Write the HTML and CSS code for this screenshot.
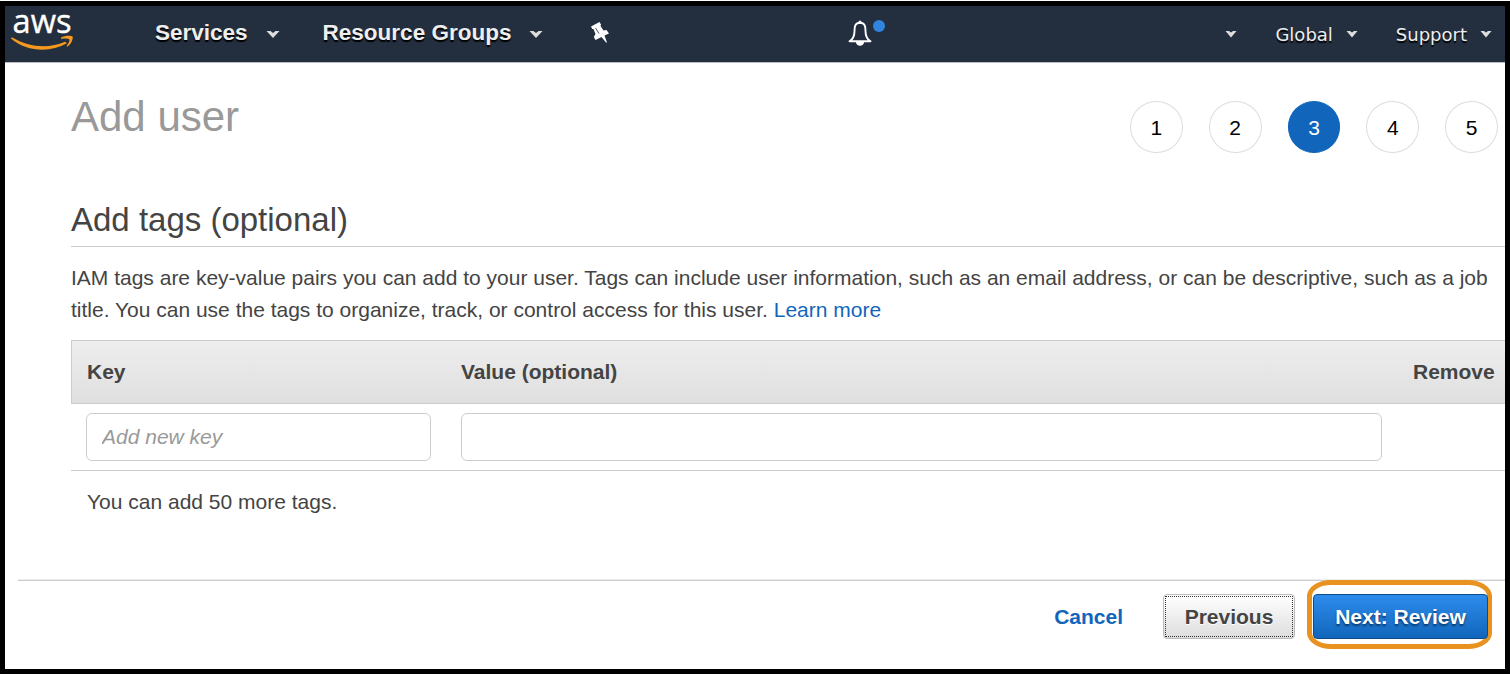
FILE: index.html
```html
<!DOCTYPE html>
<html lang="en">
<head>
<meta charset="utf-8">
<title>Add user</title>
<link rel="stylesheet" href="styles.css">
</head>
<body>
<div class="frame">
  <header class="nav">
    <svg class="logo" width="64" height="44" viewBox="0 0 64 44">
      <text class="logo-text" x="1.500" y="21.500" textLength="59" lengthAdjust="spacingAndGlyphs">aws</text>
      <path class="logo-smile" d="M.8 26.300C18 36.500 38 38 54 30.800L56 32.300C39 42 16 41 0 27.500Z"/>
      <path class="logo-smile" d="M50 26.500C54 24.500 60 24.500 61.600 25.500C62.400 28 60 33.500 56.300 35.800L55.500 35C57.500 32.500 59 29.500 58.300 28.200C56.500 27.300 54 27.500 50.300 28Z"/>
    </svg>
    <a class="menu services">Services<svg class="caret" width="14" height="9" viewBox="0 0 14 9"><path d="M.5 1H4.500L7 3L9.500 1H13.500L7 8Z"/></svg></a>
    <a class="menu groups">Resource Groups<svg class="caret" width="14" height="9" viewBox="0 0 14 9"><path d="M.5 1H4.500L7 3L9.500 1H13.500L7 8Z"/></svg></a>
    <svg class="pin" width="20" height="22" viewBox="0 0 20 22">
      <path d="M0 4.500L8.500 0L10 2.500L9.500 4L12.500 8.500L15.500 8L18 11.500L13.500 13.500L16 20.500L15 20.500L10.500 15L4.500 18L2.800 15L4.500 12L2.500 7L1.200 7Z" fill="#fff"/>
      <path d="M4.500 6L8 11.500" stroke="#232f3e" stroke-width=".8"/>
    </svg>
    <span class="bell">
      <svg width="24" height="26" viewBox="0 0 24 26">
        <path d="M12 2.800C7 3 6.500 6.500 6.500 11C6.500 16 4.500 19.500 1.500 21.300H22.500C19.500 19.500 17.500 16 17.500 11C17.500 6.500 17 3 12 2.800Z" fill="none" stroke="#fff" stroke-width="1.900" stroke-linejoin="round"/>
        <circle cx="12" cy="2" r="1.500" fill="#fff"/>
        <path d="M8 22H16C16 27 8 27 8 22Z" fill="#fff"/>
      </svg>
      <i class="dot"></i>
    </span>
    <div class="account">
      <svg class="caret" width="12" height="8" viewBox="0 0 12 8"><path d="M.5 1H4L6 2.500L8 1H11.500L6 7.500Z"/></svg>
      <a>Global<svg class="caret" width="12" height="8" viewBox="0 0 12 8"><path d="M.5 1H4L6 2.500L8 1H11.500L6 7.500Z"/></svg></a>
      <a>Support<svg class="caret" width="12" height="8" viewBox="0 0 12 8"><path d="M.5 1H4L6 2.500L8 1H11.500L6 7.500Z"/></svg></a>
    </div>
  </header>
  <main class="content">
    <div class="title-row">
      <h1>Add user</h1>
      <ol class="steps"><li>1</li><li>2</li><li class="current">3</li><li>4</li><li>5</li></ol>
    </div>
    <h2>Add tags (optional)</h2>
    <p class="intro">IAM tags are key-value pairs you can add to your user. Tags can include user information, such as an email address, or can be descriptive, such as a job<br>title. You can use the tags to organize, track, or control access for this user. <a class="link">Learn more</a></p>
    <div class="thead"><span>Key</span><span>Value (optional)</span><span>Remove</span></div>
    <div class="trow"><input class="key" type="text" placeholder="Add new key"><input class="value" type="text"></div>
    <p class="remaining">You can add 50 more tags.</p>
  </main>
  <footer class="actions">
    <a class="cancel">Cancel</a>
    <button class="btn previous"><span>Previous</span></button>
    <div class="highlight"><button class="btn next">Next: Review</button></div>
  </footer>
</div>
</body>
</html>
```
FILE: styles.css
```css
* { box-sizing: border-box; }
body {
  margin: 0;
  padding-top: 1px;
  background: #fff;
  color: #444;
  font: 21px/32px "Liberation Sans", Arial, sans-serif;
  overflow: hidden;
}
.frame {
  width: 1510px;
  height: 673px;
  border: 5px solid #000;
  display: flex;
  flex-direction: column;
}
.nav {
  height: 57px;
  flex: none;
  display: flex;
  align-items: flex-start;
  background: #232f3e;
  border-bottom: 1px solid #b9bcc3;
  color: #eee;
  text-shadow: 0 2px 1px #000;
}
.caret { fill: #ddd; flex: none; }
.logo { margin: 5px 0 0 6px; flex: none; overflow: visible; }
.logo-text { font: 500 33px "Open Sans", "Noto Sans", sans-serif; fill: #fff; stroke: #fff; stroke-width: .4px; text-shadow: none; }
.logo-smile { fill: #f7981f; }
.menu {
  display: flex;
  align-items: center;
  font-weight: bold;
  font-size: 22.5px;
  margin-top: 11px;
  white-space: nowrap;
}
.menu .caret { margin: 2px 0 0 18px; }
.services { margin-left: 80px; }
.groups { margin-left: 43px; }
.pin { margin: 16px 0 0 48px; }
.bell { display: flex; margin: 14px 0 0 237px; }
.dot { width: 12px; height: 12px; margin-left: 1px; border-radius: 50%; background: #3184dd; }
.account {
  display: flex;
  align-items: center;
  margin: 13px 13px 0 auto;
  font: 18px/32px "DejaVu Sans", Verdana, sans-serif;
}
.account .caret { margin-top: -2px; }
.account a { display: flex; align-items: center; margin-left: 38px; }
.account a .caret { margin-left: 13px; }
.content { padding-left: 66px; }
.title-row { display: flex; justify-content: space-between; padding: 30px 7px 0 0; }
h1 { margin: 0; color: #999; font-weight: normal; font-size: 42px; line-height: 48px; }
.steps { list-style: none; margin: 8px 0 0; padding: 0; display: flex; gap: 26px; color: #000; }
.steps li {
  width: 52.8px;
  height: 52px;
  border: 1px solid #ddd;
  border-radius: 50%;
  line-height: 52px;
  text-align: center;
}
.steps .current { background: #1166bb; border-color: #1166bb; color: #fff; }
h2 {
  margin: 46px 0 0;
  height: 48px;
  border-bottom: 1px solid #ccc;
  font-weight: normal;
  font-size: 33px;
  line-height: 42px;
}
.intro { margin: 15px 0 14px; white-space: nowrap; }
.link, .cancel { color: #1166bb; }
.thead {
  display: grid;
  grid-template-columns: 374px 952px 1fr;
  height: 64px;
  padding-left: 15px;
  border: 1px solid #ccc;
  border-right: 0;
  background: linear-gradient(#eee, #dfdfdf);
  font-weight: bold;
  line-height: 62px;
}
.trow { display: flex; gap: 30px; height: 67px; padding: 9px 0 0 15px; border-bottom: 1px solid #ccc; }
input {
  height: 48px;
  padding: 0 15px;
  border: 1px solid #ccc;
  border-radius: 6px;
  font: 21px "Liberation Sans", Arial, sans-serif;
}
input::placeholder { color: #999; font-style: italic; opacity: 1; }
.key { width: 345px; }
.value { width: 921px; }
.remaining { margin: 15px 0 0 16px; }
.actions {
  display: flex;
  margin: 61px 0 0 13px;
  padding: 2px 13px 0 0;
  justify-content: flex-end;
  align-items: flex-start;
  background: linear-gradient(#eee 1px, #ccc 1px, #ccc 2px, transparent 2px);
  font-weight: bold;
}
.cancel { margin: 20px 40px 0 0; }
.btn { font: bold 21px/32px "Liberation Sans", Arial, sans-serif; border-radius: 4px; padding: 0; }
.previous {
  width: 132px;
  height: 45px;
  margin: 13px 12px 0 0;
  padding: 1px;
  border: 1px solid #bbb;
  background: linear-gradient(#fff, #ddd);
  color: #444;
  text-shadow: 0 1px 0 #fff;
}
.previous span { display: block; height: 41px; border: 1px dotted #333; line-height: 39px; }
.highlight {
  width: 185px;
  height: 69px;
  margin-top: -1px;
  padding: 9px 0 0 1px;
  border: 5px solid #e8921f;
  border-radius: 24px / 16px;
}
.next {
  width: 175px;
  height: 45px;
  border: 1px solid #0e4b8a;
  background: linear-gradient(#2e8cec, #1166bb);
  color: #fff;
  text-shadow: 0 2px 2px #0a3a6c;
}
```
